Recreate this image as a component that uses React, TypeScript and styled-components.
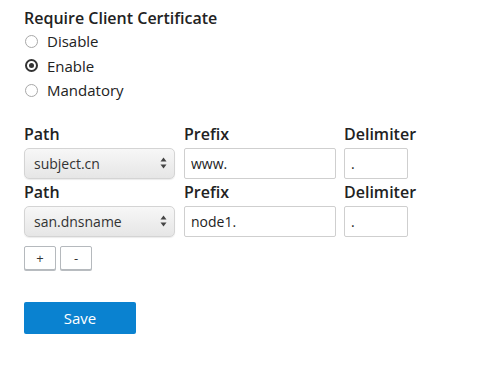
import styled, { createGlobalStyle } from "styled-components";

const GlobalStyle = createGlobalStyle`
  body {
    margin: 0;
    background: #fff;
    font-family: "Open Sans", "Noto Sans", sans-serif;
    color: #222;
  }
`;

const rows = [
  { path: "subject.cn", prefix: "www.", delimiter: "." },
  { path: "san.dnsname", prefix: "node1.", delimiter: "." },
];

export default function App() {
  return (
    <Page>
      <GlobalStyle />
      <Title>Require Client Certificate</Title>
      <RadioList>
        {["Disable", "Enable", "Mandatory"].map((opt) => (
          <RadioRow key={opt}>
            <Radio checked={opt === "Enable"} />
            {opt}
          </RadioRow>
        ))}
      </RadioList>
      <Mappings>
        {rows.map((r, i) => (
          <MapRow key={i}>
            <Field>
              <Label>Path</Label>
              <SelectBox>
                <span>{r.path}</span>
                <svg width="7" height="12" viewBox="0 0 7 12">
                  <path d="M3.5 0.5 L6.5 4.5 H0.5 Z" fill="#444" />
                  <path d="M3.5 11.5 L6.5 7.5 H0.5 Z" fill="#444" />
                </svg>
              </SelectBox>
            </Field>
            <Field>
              <Label>Prefix</Label>
              <TextInput $width={152} defaultValue={r.prefix} />
            </Field>
            <Field>
              <Label>Delimiter</Label>
              <TextInput $width={64} defaultValue={r.delimiter} />
            </Field>
          </MapRow>
        ))}
      </Mappings>
      <ButtonRow>
        <SmallButton>+</SmallButton>
        <SmallButton>-</SmallButton>
      </ButtonRow>
      <SaveButton>Save</SaveButton>
    </Page>
  );
}

const Page = styled.div`
  padding: 7px 24px 20px;
`;

const Title = styled.div`
  font-size: 16px;
  font-weight: 600;
  line-height: 22px;
`;

const RadioList = styled.div`
  display: flex;
  flex-direction: column;
`;

const RadioRow = styled.label`
  display: flex;
  align-items: center;
  gap: 9px;
  height: 24.5px;
  font-size: 15px;
  color: #222;
`;

const Radio = styled.span<{ checked?: boolean }>`
  box-sizing: border-box;
  width: 13px;
  height: 13px;
  margin-left: 1px;
  border-radius: 50%;
  border: ${(p) => (p.checked ? "2px solid #333" : "1px solid #a8a8a8")};
  display: flex;
  align-items: center;
  justify-content: center;
  &::after {
    content: "";
    width: 5px;
    height: 5px;
    border-radius: 50%;
    background: ${(p) => (p.checked ? "#333" : "transparent")};
  }
`;

const Mappings = styled.div`
  margin-top: 20px;
  display: flex;
  flex-direction: column;
  gap: 2px;
`;

const MapRow = styled.div`
  display: grid;
  grid-template-columns: 160px 160px auto;
`;

const Field = styled.div`
  display: flex;
  flex-direction: column;
  align-items: flex-start;
`;

const Label = styled.div`
  font-size: 16px;
  font-weight: 600;
  line-height: 22px;
  margin-bottom: 3px;
`;

const SelectBox = styled.div`
  box-sizing: border-box;
  width: 151px;
  height: 31px;
  padding: 0 7px 0 9px;
  display: flex;
  align-items: center;
  justify-content: space-between;
  border: 1px solid #d4d4d4;
  border-radius: 5px;
  background: linear-gradient(#f7f7f7, #e6e6e6);
  box-shadow: 0 1px 1px rgba(0, 0, 0, 0.08);
  font-size: 14px;
  color: #333;
`;

const TextInput = styled.input<{ $width: number }>`
  box-sizing: border-box;
  width: ${(p) => p.$width}px;
  height: 31px;
  padding: 0 6px;
  border: 1px solid #cfcfcf;
  border-radius: 2px;
  font-family: "Open Sans", sans-serif;
  font-size: 14px;
  color: #222;
  outline: none;
`;

const ButtonRow = styled.div`
  display: flex;
  gap: 4px;
  margin-top: 9px;
`;

const SmallButton = styled.button`
  box-sizing: border-box;
  width: 32px;
  height: 24px;
  padding: 0;
  background: #fff;
  border: 1px solid #b5b9bd;
  border-radius: 2px;
  box-shadow: 0 1px 0 #b8bcc0;
  font-family: "Open Sans", sans-serif;
  font-size: 13px;
  color: #333;
`;

const SaveButton = styled.button`
  display: block;
  margin-top: 32px;
  width: 112px;
  height: 32px;
  border: none;
  border-radius: 2px;
  background: #0a82d0;
  color: #fff;
  font-family: "Open Sans", sans-serif;
  font-size: 15px;
`;
